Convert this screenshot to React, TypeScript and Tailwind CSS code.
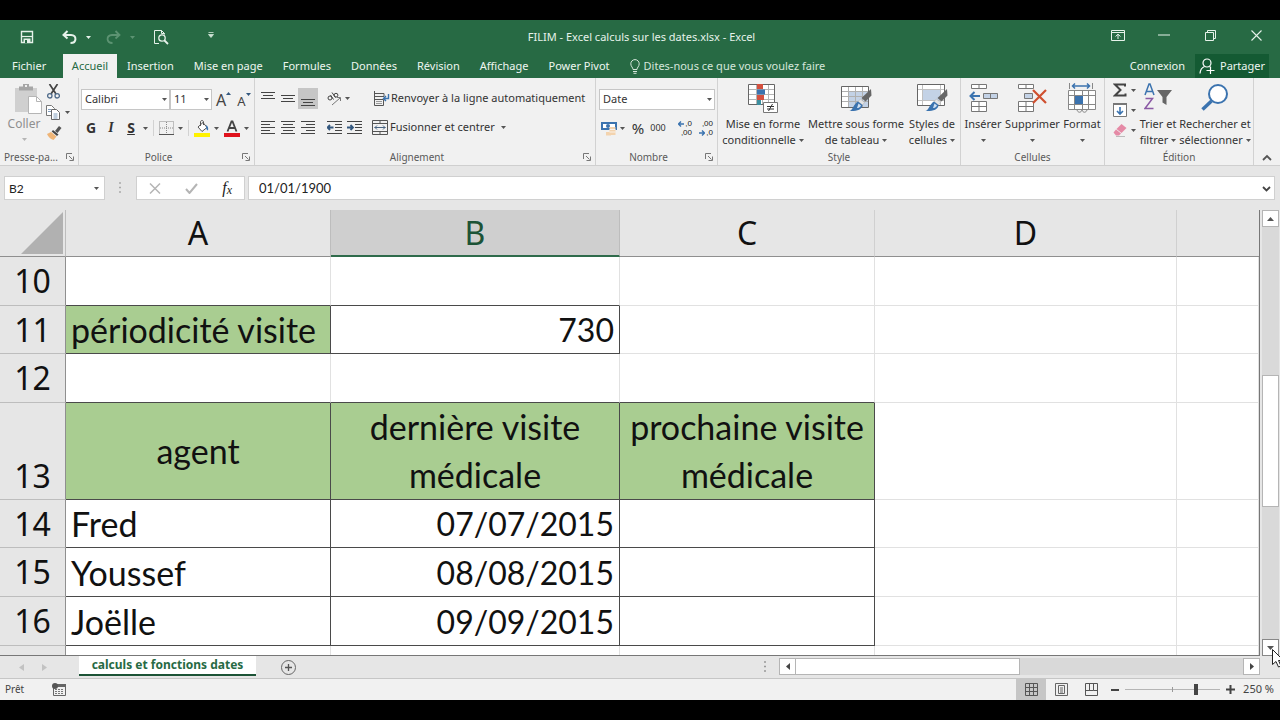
import React from "react";

type Kids = { children: React.ReactNode };
const INK = "#444444";
const BLUE = "#3b73af";

function Svg({ w, h, children, className = "" }: { w: number; h: number; className?: string } & Kids) {
  return (
    <svg width={w} height={h} viewBox={`0 0 ${w} ${h}`} fill="none" className={`shrink-0 ${className}`} aria-hidden="true">
      {children}
    </svg>
  );
}

function Caret({ color = "#555", className = "" }: { color?: string; className?: string }) {
  return (
    <Svg w={5} h={3} className={className}>
      <path d="M0 0h5L2.5 3z" fill={color} />
    </Svg>
  );
}

function Tool({ label, children, className = "" }: { label: string; className?: string } & Kids) {
  return (
    <button type="button" aria-label={label} className={`flex shrink-0 items-center justify-center ${className}`}>
      {children}
    </button>
  );
}

/* ---------- title bar ---------- */

function WindowTitle() {
  return (
    <div className="flex h-[34px] shrink-0 items-center text-[#e6f2ea]">
      <div className="flex flex-1 items-center pl-5">
        <Tool label="Enregistrer" className="w-[14px]">
          <Svg w={14} h={14}>
            <path d="M1.5 1.5h11v11h-11z" stroke="#e6f2ea" strokeWidth="1.4" />
            <path d="M2 6.500h10" stroke="#e6f2ea" strokeWidth="1.2" />
            <path d="M3.5 8.5h7V13h-7z" fill="#e6f2ea" />
            <path d="M5 10h2v3H5z" fill="#276a44" />
          </Svg>
        </Tool>
        <Tool label="Annuler" className="ml-7 w-[15px]">
          <Svg w={15} h={14}>
            <path d="M5.5 1 1.5 5l4 3.500M1.500 5h7.500c6 .3 6 8-.5 8" stroke="#e6f2ea" strokeWidth="2" />
          </Svg>
        </Tool>
        <Caret color="#e6f2ea" className="ml-[9px]" />
        <Tool label="Rétablir" className="ml-[15px] w-[15px]">
          <Svg w={15} h={14}>
            <path d="m9.500 1 4 4-4 3.500M13.500 5H6c-6 .3-6 8 .5 8" stroke="#5c9372" strokeWidth="1.8" />
          </Svg>
        </Tool>
        <Caret color="#5c9372" className="ml-[9px]" />
        <Tool label="Aperçu avant impression" className="ml-[18px] w-[16px]">
          <Svg w={16} h={16}>
            <path d="M6 14.500H1.500v-13h7l3 3v1M8.500 1.500v3h3" stroke="#e6f2ea" />
            <circle cx="9" cy="9" r="3.200" stroke="#e6f2ea" strokeWidth="1.300" />
            <path d="m11.500 11.500 3.500 3.500" stroke="#e6f2ea" strokeWidth="1.800" />
          </Svg>
        </Tool>
        <Tool label="Personnaliser la barre d'outils" className="ml-[39px] w-[6px] pb-1">
          <Svg w={6} h={6}>
            <path d="M.5.500h5M.5 2.500h5L3 5.500z" stroke="#cfe3d6" strokeWidth=".8" fill="#cfe3d6" />
          </Svg>
        </Tool>
      </div>
      <h1 className="text-[11px]">FILIM - Excel calculs sur les dates.xlsx - Excel</h1>
      <div className="flex flex-1 items-center justify-end gap-8 pr-[17px] pb-1">
        <Tool label="Options d'affichage du ruban" className="w-[14px]">
          <Svg w={14} h={11}>
            <path d="M.5.500h13v10H.5zM.5 2.500h13M7 9V4.500M4.500 6.500 7 4.200l2.500 2.300" stroke="#e6f2ea" />
          </Svg>
        </Tool>
        <Tool label="Réduire" className="w-[14px]">
          <Svg w={12} h={2}>
            <path d="M0 1h12" stroke="#e6f2ea" />
          </Svg>
        </Tool>
        <Tool label="Niveau inférieur" className="w-[14px]">
          <Svg w={11} h={11}>
            <path d="M.5 2.500h8v8h-8zM2.500 2.500v-2h8v8h-2" stroke="#e6f2ea" />
          </Svg>
        </Tool>
        <Tool label="Fermer" className="w-[14px]">
          <Svg w={11} h={11}>
            <path d="m.5.500 10 10m0-10-10 10" stroke="#e6f2ea" strokeWidth="1.100" />
          </Svg>
        </Tool>
      </div>
    </div>
  );
}

const tabs = ["Insertion", "Mise en page", "Formules", "Données", "Révision", "Affichage", "Power Pivot"];

function RibbonTabs() {
  return (
    <nav className="flex h-6 shrink-0 items-stretch text-[11px] text-[#eef6f0]">
      <a href="#fichier" className="flex w-[63px] items-center pl-3">Fichier</a>
      <a href="#accueil" className="flex w-[54px] items-center justify-center bg-[#f1f1f1] text-[#276a44]">Accueil</a>
      <div className="flex items-center gap-5 pl-[10px]">
        {tabs.map((t) => (
          <a key={t} href={`#${t}`} className="whitespace-nowrap">{t}</a>
        ))}
      </div>
      <button type="button" className="ml-5 flex items-center gap-1 whitespace-nowrap text-[#d5e6db]">
        <Svg w={10} h={15}>
          <path d="M3 10.500C3 8.500.8 7.500.8 4.800a4.200 4.200 0 0 1 8.400 0c0 2.700-2.200 3.700-2.200 5.700zM3 12.500h4M3.500 14.300h3" stroke="#d5e6db" />
        </Svg>
        Dites-nous ce que vous voulez faire
      </button>
      <div className="flex flex-1 justify-end">
        <a href="#connexion" className="flex items-center px-[10px]">Connexion</a>
        <button type="button" className="mr-[11px] flex w-[74px] items-center gap-1 bg-[#145a33] pl-1">
          <Svg w={17} h={16}>
            <circle cx="8" cy="5" r="4" stroke="#fff" strokeWidth="1.200" />
            <path d="M1 15.500c.3-4 2-6 4.500-7M10.500 8.500l1.500 1M7.500 12.500h8M11.500 9v7" stroke="#fff" strokeWidth="1.200" />
          </Svg>
          Partager
        </button>
      </div>
    </nav>
  );
}

/* ---------- ribbon ---------- */

function Launcher() {
  return (
    <button type="button" aria-label="Options du groupe" className="absolute right-1 bottom-1">
      <Svg w={8} h={8}>
        <path d="M.5 6V.500H6M3 3l3.500 3.500M7.500 3.500v4h-4" stroke="#777" />
      </Svg>
    </button>
  );
}

function Group({ name, width, launcher = false, children }: { name: string; width: string; launcher?: boolean } & Kids) {
  return (
    <section className={`relative flex shrink-0 flex-col border-r border-[#d2d2d2] ${width}`}>
      <div className="h-[72px]">{children}</div>
      <h2 className={`text-center text-[10px] leading-4 text-[#5a5a5a] ${launcher ? "pr-4" : ""}`}>{name}</h2>
      {launcher && <Launcher />}
    </section>
  );
}

function Drop({ label, value, width }: { label: string; value: string; width: string }) {
  return (
    <div className={`relative h-[21px] shrink-0 ${width}`}>
      <select aria-label={label} defaultValue={value} className="block h-full w-full appearance-none border border-[#c6c6c6] bg-white pl-[3px] text-[11px] text-[#333]">
        <option>{value}</option>
      </select>
      <Caret className="pointer-events-none absolute top-[9px] right-[3px]" />
    </div>
  );
}

function Lines({ rows }: { rows: [number, number][] }) {
  return (
    <Svg w={14} h={14}>
      {rows.map(([x, len], i) => (
        <path key={i} d={`M${x} ${i * 3 + 1.5}h${len}`} stroke={INK} />
      ))}
    </Svg>
  );
}

function VLines({ y }: { y: number }) {
  return (
    <Svg w={14} h={16}>
      <path d={`M0 ${y + 0.5}h14M2 ${y + 3.5}h10M0 ${y + 6.5}h14`} stroke={INK} />
    </Svg>
  );
}

function Indent({ flip = false }: { flip?: boolean }) {
  return (
    <Svg w={15} h={14}>
      <path d="M0 1.500h15M8 4.500h7M8 7.500h7M8 10.500h7M0 13.500h15" stroke={INK} />
      <path d={flip ? "M0 7.500h6M3.500 5 6 7.500 3.500 10" : "M.500 7.500h6M3 5 .500 7.500 3 10"} stroke="#34587f" strokeWidth="1.800" />
    </Svg>
  );
}

function Clipboard() {
  return (
    <Group name="Presse-pa..." width="w-[79px]" launcher>
      <div className="flex pt-[6px] pl-[7px]">
        <button type="button" className="flex w-[34px] flex-col items-center text-[12px] text-[#8f8f8f]">
          <Svg w={28} h={30} className="ml-2">
            <path d="M1 4h22v24H1z" fill="#d0d0d0" />
            <path d="M5 2.500h4V0h6v2.500h4v4H5z" fill="#a6a6a6" />
            <path d="M11 1h2v2h-2z" fill="#f1f1f1" />
            <path d="M14.500 12.500h8l5 5v12h-13z" fill="#fff" stroke="#b5b5b5" />
            <path d="M22.500 12.500v5h5" stroke="#b5b5b5" />
          </Svg>
          <span className="leading-5">Coller</span>
          <Caret color="#b5b5b5" className="mt-1" />
        </button>
        <div className="flex flex-col gap-[6px] pl-[5px]">
          <Tool label="Couper" className="w-[14px]">
            <Svg w={13} h={15}>
              <path d="M2.500 0 9 10M10.500 0 4 10" stroke="#444" strokeWidth="1.700" />
              <circle cx="2.800" cy="11.800" r="2.200" stroke="#4f6b8a" strokeWidth="1.300" />
              <circle cx="10.200" cy="11.800" r="2.200" stroke="#4f6b8a" strokeWidth="1.300" />
            </Svg>
          </Tool>
          <Tool label="Copier" className="gap-[5px]">
            <Svg w={14} h={15}>
              <path d="M.500.500h5l3 3v7h-8z" fill="#fff" stroke="#777" />
              <path d="M5.500 4.500h5l3 3v7h-8z" fill="#fff" stroke="#666" />
              <path d="M2 4.500h3M2 6.500h3M7.500 9h4M7.500 11h4M7.500 13h4" stroke="#7f9cbc" />
            </Svg>
            <Caret />
          </Tool>
          <Tool label="Reproduire la mise en forme" className="w-[16px]">
            <Svg w={15} h={14}>
              <path d="m12 0 2.500 2-4 5-2.500-2z" fill="#555" />
              <path d="m6 4 5.500 4.500-1.500 1.500L4.700 5.500z" fill="#444" />
              <path d="m4 6 5.500 4.500L6.500 14C3 13 1 10.500 0 8z" fill="#efb577" />
            </Svg>
          </Tool>
        </div>
      </div>
    </Group>
  );
}

function FontGroup() {
  return (
    <Group name="Police" width="w-[176px]" launcher>
      <div className="flex h-full flex-col gap-2 pt-[11px] pl-[2px]">
        <div className="flex h-[21px] items-center">
          <Drop label="Police" value="Calibri" width="w-[89px]" />
          <Drop label="Taille de police" value="11" width="w-[42px]" />
          <Tool label="Augmenter la taille" className="ml-1 text-[16px] leading-5 text-[#444]">
            A<Svg w={5} h={3} className="mb-3"><path d="M0 3h5L2.500 0z" fill="#34587f" /></Svg>
          </Tool>
          <Tool label="Réduire la taille" className="ml-[6px] pt-[2px] text-[13px] leading-5 text-[#444]">
            A<Caret color="#34587f" className="mb-3" />
          </Tool>
        </div>
        <div className="flex h-5 items-center text-[14px] leading-5 text-[#333]">
          <Tool label="Gras" className="w-5 font-bold">G</Tool>
          <Tool label="Italique" className="w-5 font-['Liberation_Serif',serif] font-bold italic">I</Tool>
          <Tool label="Souligné" className="w-5 font-bold underline">S</Tool>
          <Caret className="ml-[2px]" />
          <span className="ml-[5px] h-4 w-px bg-[#d2d2d2]" />
          <Tool label="Bordures" className="ml-[5px]">
            <Svg w={15} h={14}>
              <path d="M.500.500h14v13H.500zM7.500 1v12M1 7h13" stroke="#8a8a8a" strokeDasharray="1 1" />
              <path d="M0 13.500h15" stroke="#555" />
            </Svg>
          </Tool>
          <Caret className="ml-1" />
          <span className="ml-[5px] h-4 w-px bg-[#d2d2d2]" />
          <Tool label="Couleur de remplissage" className="ml-[5px]">
            <Svg w={16} h={17}>
              <path d="m4 7 5-4.500 4 5-5 4z" fill="#fff" stroke="#555" />
              <path d="M6.500 6V2c0-2 3-2 3 0v3" stroke="#555" />
              <path d="M12 5c2 1 2.500 3 2 5.500-1.500-.5-2-2-2-5.500z" fill={BLUE} />
              <path d="M0 13h16v4H0z" fill="#fff200" />
            </Svg>
          </Tool>
          <Caret className="ml-1" />
          <Tool label="Couleur de police" className="ml-[5px]">
            <Svg w={16} h={17}>
              <path d="M3.500 11.500 7.500 1.500h1l4 10M5 8h6" stroke="#444" strokeWidth="1.800" />
              <path d="M0 13h16v4H0z" fill="#e0121c" />
            </Svg>
          </Tool>
          <Caret className="ml-1" />
        </div>
      </div>
    </Group>
  );
}

function AlignGroup() {
  return (
    <Group name="Alignement" width="w-[341px]" launcher>
      <div className="flex h-full flex-col gap-2 pt-[10px] pl-[3px] text-[11px] text-[#333]">
        <div className="flex h-[21px] items-center">
          <Tool label="Aligner en haut" className="h-[21px] w-5"><VLines y={1} /></Tool>
          <Tool label="Aligner au centre" className="h-[21px] w-5"><VLines y={4} /></Tool>
          <Tool label="Aligner en bas" className="h-[21px] w-5 bg-[#c6c6c6]"><VLines y={8} /></Tool>
          <Tool label="Orientation" className="ml-[9px]">
            <Svg w={15} h={14}>
              <circle cx="3" cy="6" r="2" stroke={INK} />
              <path d="m3.500 3 3 4.500" stroke={INK} />
              <path d="m5 .5 3.500 5" stroke={INK} />
              <circle cx="9" cy="3.200" r="1.900" stroke={INK} />
              <path d="m5 13 8-7M13.500 9V5.500H10" stroke="#777" />
            </Svg>
          </Tool>
          <Caret className="ml-[3px]" />
          <Tool label="Renvoyer à la ligne automatiquement" className="ml-6 gap-px">
            <Svg w={16} h={15}>
              <path d="M.500 0v14.500M.500 2.500h9.500v3H.500M.500 8.500h9v6h-9" stroke="#555" />
              <path d="M2 10.500h6M2 12.500h6" stroke="#9a9a9a" />
              <path d="M14.500 3v4.500H10M12 5 9.500 7.500 12 10" stroke={BLUE} strokeWidth="1.400" />
            </Svg>
            <span className="whitespace-nowrap">Renvoyer à la ligne automatiquement</span>
          </Tool>
        </div>
        <div className="flex h-5 items-center">
          <Tool label="Aligner à gauche" className="w-5"><Lines rows={[[0, 14], [0, 9], [0, 14], [0, 9], [0, 14]]} /></Tool>
          <Tool label="Centrer" className="w-5"><Lines rows={[[0, 14], [2, 10], [0, 14], [2, 10], [0, 14]]} /></Tool>
          <Tool label="Aligner à droite" className="w-5"><Lines rows={[[0, 14], [5, 9], [0, 14], [5, 9], [0, 14]]} /></Tool>
          <Tool label="Diminuer le retrait" className="ml-[9px]"><Indent /></Tool>
          <Tool label="Augmenter le retrait" className="ml-[5px]"><Indent flip /></Tool>
          <Tool label="Fusionner et centrer" className="ml-[10px] gap-[2px]">
            <Svg w={16} h={15}>
              <path d="M.500.500h15v14H.500zM.500 3.500h15M.500 11.500h15M8 .500v3M8 11.500v3" stroke="#555" />
              <path d="M2.500 7.500h11M5 5.500l-2 2 2 2M11 5.500l2 2-2 2" stroke="#4a6583" />
            </Svg>
            <span className="whitespace-nowrap">Fusionner et centrer</span>
            <Caret className="ml-1" />
          </Tool>
        </div>
      </div>
    </Group>
  );
}

function Decimals({ top, bottom, arrow }: { top: string; bottom: string; arrow: "top" | "bottom" }) {
  const blue = (
    <Svg w={6} h={6}>
      <path d={arrow === "top" ? "M.5 3H6M3 .5.5 3 3 5.500" : "M0 3h5.500M3 .500 5.500 3 3 5.500"} stroke={BLUE} strokeWidth="1.400" />
    </Svg>
  );
  return (
    <span className="flex w-4 flex-col items-end font-['Liberation_Sans',sans-serif] text-[8px] leading-[9px] text-[#222]">
      <span className="flex items-center gap-px">{arrow === "top" && blue}{top}</span>
      <span className="flex items-center gap-px">{arrow === "bottom" && blue}{bottom}</span>
    </span>
  );
}

function NumberGroup() {
  return (
    <Group name="Nombre" width="w-[122px]" launcher>
      <div className="flex h-full flex-col gap-2 pt-[11px] pl-[3px] text-[#333]">
        <Drop label="Format de nombre" value="Date" width="w-[116px]" />
        <div className="flex h-5 items-center pl-[2px]">
          <Tool label="Format comptabilité">
            <Svg w={16} h={15}>
              <path d="M0 1h16v8H0z" fill={BLUE} />
              <path d="M2 3h12v4H2z" fill="#fff" />
              <circle cx="7" cy="5" r="2" fill={BLUE} />
              <path d="M8.500 6h6v8h-6z" fill="#f3d3ae" />
              <path d="M5 11h5v3.500H5z" fill="#f3d3ae" />
              <path d="M8.500 8.500h6M8.500 11h6" stroke="#fff" strokeWidth=".7" />
            </Svg>
          </Tool>
          <Caret className="ml-[3px]" />
          <Tool label="Pourcentage" className="ml-[5px] w-4 text-[15px]">%</Tool>
          <Tool label="Séparateur de milliers" className="ml-1 w-4 text-[9px]">000</Tool>
          <Tool label="Ajouter une décimale" className="ml-[10px]"><Decimals top=",0" bottom=",00" arrow="top" /></Tool>
          <Tool label="Réduire les décimales" className="ml-[5px]"><Decimals top=",00" bottom=",0" arrow="bottom" /></Tool>
        </div>
      </div>
    </Group>
  );
}

function BigButton({ icon, lines, width }: { icon: React.ReactNode; lines: [string, string]; width: string }) {
  return (
    <button type="button" className={`flex shrink-0 flex-col items-center pt-[5px] text-[11px] leading-4 text-[#333] ${width}`}>
      <span className="flex h-[33px] items-start justify-center">{icon}</span>
      <span className="whitespace-nowrap">{lines[0]}</span>
      <span className="flex h-4 items-center gap-[3px] whitespace-nowrap">
        {lines[1]}
        <Caret />
      </span>
    </button>
  );
}

function Brush() {
  return (
    <>
      <path d="m30 6 .5 6.500-6 6-4-3.500z" fill="#666" />
      <path d="m19.500 16 4 3.500-2 2.500-4.500-3.500z" fill="#e4e4e4" stroke="#aaa" strokeWidth=".5" />
      <path d="m17 18.500 4.500 3.500c0 5-7 6.500-13 6 3.500-1 4-7 8.500-9.500z" fill={BLUE} />
      <path d="m17.500 20.500 2.500 2c-1 2-2.500 2.500-4 2.500z" fill="#cfe0f2" />
    </>
  );
}

function StyleGroup() {
  return (
    <Group name="Style" width="w-[243px]">
      <div className="flex justify-between px-[3px]">
        <BigButton
          width="w-[84px]"
          lines={["Mise en forme", "conditionnelle"]}
          icon={
            <Svg w={30} h={30}>
              <path d="M.500 1.500h26v20H.500z" fill="#fff" />
              <path d="M.500 6.500h26M.500 11.500h26M.500 16.500h26M8.500 1v20M14.500 1v20M20.500 1v20" stroke="#b5b5b5" />
              <path d="M.500 1.500h26v20H.500z" stroke="#666" />
              <path d="M9 1h6v5H9zM9 12h7v5H9z" fill="#d4503f" />
              <path d="M9 6.500h8v5H9z" fill={BLUE} />
              <path d="M9 17h4v5H9z" fill="#3d8f9f" />
              <path d="M15.500 19.500h14v10h-14z" fill="#fff" stroke="#777" />
              <path d="M19 23.500h7M19 26h7M24.500 21l-4 7" stroke="#333" />
            </Svg>
          }
        />
        <BigButton
          width="w-[98px]"
          lines={["Mettre sous forme", "de tableau"]}
          icon={
            <Svg w={31} h={30}>
              <path d="M.500 3.500h27v21H.500z" fill="#fff" />
              <path d="M8 9h20v15H8z" fill="#c3d2e6" />
              <path d="M.500 8.500h27M.500 13.500h27M.500 18.500h27M7.500 4v20M14.500 4v20M21.500 4v20" stroke="#b0b0b0" />
              <path d="M.500 3.500h27v21H.500z" stroke="#666" />
              <Brush />
            </Svg>
          }
        />
        <BigButton
          width="w-[50px]"
          lines={["Styles de", "cellules"]}
          icon={
            <Svg w={31} h={30}>
              <path d="M.500 1.500h27v21H.500z" fill="#fff" />
              <path d="M.500 6.500h27M.500 17.500h27M5.500 1v21M23.500 1v21" stroke="#c0c0c0" />
              <path d="M.500 1.500h27v21H.500z" stroke="#666" />
              <path d="M6 7h17v10H6z" fill="#c3d2e6" />
              <Brush />
            </Svg>
          }
        />
      </div>
    </Group>
  );
}

function CellsGroup() {
  return (
    <Group name="Cellules" width="w-[144px]">
      <div className="flex justify-between px-[2px]">
        <BigButton
          width="w-[40px]"
          lines={["Insérer", ""]}
          icon={
            <Svg w={29} h={30}>
              <path d="M2.500 1.500h15v4h-15zM10 1.500v4M2.500 18.500h15v10h-15zM10 18.500v10M2.500 23.500h15" fill="#fff" stroke="#777" />
              <path d="M14.500 10.500h14v5h-14zM21.500 10.500v5" fill="#c3d2e6" stroke="#777" />
              <path d="M1 13h10M5.500 9l-4 4 4 4" stroke={BLUE} strokeWidth="2" />
            </Svg>
          }
        />
        <BigButton
          width="w-[56px]"
          lines={["Supprimer", ""]}
          icon={
            <Svg w={29} h={30}>
              <path d="M.500 1.500h15v4h-15zM8 1.500v4M.500 18.500h15v10h-15zM8 18.500v10M.500 23.500h15" fill="#fff" stroke="#777" />
              <path d="M6.500 10.500h8v5h-8z" fill="#c3d2e6" stroke="#777" />
              <path d="m15 7 13 13M28 7 15 20" stroke="#cf5030" strokeWidth="2.200" />
            </Svg>
          }
        />
        <BigButton
          width="w-[40px]"
          lines={["Format", ""]}
          icon={
            <Svg w={29} h={30}>
              <path d="M.500 7.500h27v19H.500zM.500 12.500h27M.500 21.500h27M6.500 8v18M14.500 8v18M20.500 8v18" fill="#fff" stroke="#888" />
              <path d="M7 13h8v8H7z" fill={BLUE} />
              <path d="M1.500 0v6M24.500 0v6M9 27c1 3 4 3 5 0 1 3 4 3 5 0" stroke="#888" />
              <path d="M4 3h18M7 .5 4.500 3 7 5.500M19 .500 21.500 3 19 5.500" stroke={BLUE} strokeWidth="1.500" />
            </Svg>
          }
        />
      </div>
    </Group>
  );
}

function EditGroup() {
  return (
    <Group name="Édition" width="w-[149px]">
      <div className="flex pl-[5px]">
        <div className="flex w-[28px] flex-col gap-[6px] pt-[5px]">
          <Tool label="Somme automatique" className="gap-1">
            <Svg w={14} h={14}><path d="M12 3.500V1.500H2L7.500 7 2 12.500h10.500v-2" stroke="#444" strokeWidth="2" /></Svg>
            <Caret />
          </Tool>
          <Tool label="Remplissage" className="gap-1">
            <Svg w={14} h={14}>
              <path d="M.500.500h13v13H.500z" fill="#fff" stroke="#777" />
              <path d="M0 0h14v2H0z" fill="#777" />
              <path d="M7 4v7M4 8l3 3 3-3" stroke={BLUE} strokeWidth="1.600" />
            </Svg>
            <Caret />
          </Tool>
          <Tool label="Effacer" className="gap-1">
            <Svg w={14} h={14}>
              <path d="m8.500 1 5 4-5 5-5-4z" fill="#e58aa6" />
              <path d="m3 6.500 5 4-2 2H3L.500 9.500z" fill="#e58aa6" />
              <path d="M3 13.500h9" stroke="#bbb" />
            </Svg>
            <Caret />
          </Tool>
        </div>
        <BigButton
          width="w-[40px]"
          lines={["Trier et", "filtrer"]}
          icon={
            <Svg w={28} h={28}>
              <path d="M1 12 5 1h1l4 11M2.500 8.500h6" stroke={BLUE} strokeWidth="1.500" />
              <path d="M1.500 15.500h7l-7.500 10h8.500" stroke="#8b5aa5" strokeWidth="1.500" />
              <path d="M13 7h15l-5.500 7v8l-4-2.500V14z" fill="#666" />
            </Svg>
          }
        />
        <BigButton
          width="w-[74px]"
          lines={["Rechercher et", "sélectionner"]}
          icon={
            <Svg w={28} h={28}>
              <circle cx="17" cy="11" r="9" stroke={BLUE} strokeWidth="2" fill="#fff" />
              <path d="m10.500 18-9 8.500" stroke={BLUE} strokeWidth="3.500" />
            </Svg>
          }
        />
      </div>
    </Group>
  );
}

function Ribbon() {
  return (
    <div className="flex h-[88px] shrink-0 border-b border-[#cfcfcf] bg-[#f1f1f1]">
      <Clipboard />
      <FontGroup />
      <AlignGroup />
      <NumberGroup />
      <StyleGroup />
      <CellsGroup />
      <EditGroup />
      <div className="flex flex-1 items-end justify-center pb-1">
        <Tool label="Réduire le ruban">
          <Svg w={10} h={7}><path d="m1 6 4-4 4 4" stroke="#555" strokeWidth="1.800" /></Svg>
        </Tool>
      </div>
    </div>
  );
}

/* ---------- formula bar ---------- */

function FormulaBar() {
  return (
    <div className="flex h-11 shrink-0 items-center pr-[5px] pl-[4px] font-['Lato',sans-serif] text-[12px] text-[#222]">
      <div className="relative h-6 w-[101px] border border-[#d0d0d0] bg-white">
        <input aria-label="Zone Nom" defaultValue="B2" className="h-full w-full bg-transparent pl-1 outline-none" />
        <Caret className="pointer-events-none absolute top-[10px] right-[5px]" />
      </div>
      <Svg w={3} h={12} className="ml-[14px]">
        <path d="M0 1h2M0 5.500h2M0 10h2" stroke="#aaa" strokeWidth="1.500" />
      </Svg>
      <div className="ml-[14px] flex h-6 w-[109px] items-center justify-between border border-[#d0d0d0] bg-white px-3">
        <Tool label="Annuler la saisie">
          <Svg w={12} h={11}><path d="m1 .500 10 10m0-10-10 10" stroke="#b5b5b5" strokeWidth="1.500" /></Svg>
        </Tool>
        <Tool label="Entrer">
          <Svg w={13} h={11}><path d="m1 6 3.500 4L12 1" stroke="#b5b5b5" strokeWidth="2" /></Svg>
        </Tool>
        <Tool label="Insérer une fonction" className="font-['Liberation_Serif',serif] text-[16px] leading-5 italic">
          f<span className="pt-1 text-[12px]">x</span>
        </Tool>
      </div>
      <div className="relative ml-[3px] h-6 flex-1 border border-[#d0d0d0] bg-white">
        <input aria-label="Barre de formule" defaultValue="01/01/1900" className="h-full w-full bg-transparent pl-[10px] text-[13px] outline-none" />
        <Svg w={9} h={6} className="pointer-events-none absolute top-[9px] right-[3px]">
          <path d="m1 1 3.500 3.500L8 1" stroke="#444" strokeWidth="1.800" />
        </Svg>
      </div>
    </div>
  );
}

/* ---------- sheet ---------- */

const K = "border-[#4a4a4a]";
const head = "border-r border-b bg-[#e6e6e6] p-0 text-[32px] leading-[46px] font-normal text-[#111] font-['Noto_Sans','Open_Sans',sans-serif]";
const rowHead = `${head} border-r-[#8f8f8f] border-b-[#bdbdbd]`;
const plain = "border-r border-b border-[#e1e1e1] p-0";
const edgeB = "border-r border-b border-r-[#e1e1e1] border-b-[#4a4a4a] p-0";
const boxed = `border-r border-b ${K} py-0 px-[5px]`;
const green = `${boxed} bg-[#a9cd91]`;

const visits = [
  { row: 14, name: "Fred", last: "07/07/2015", h: "h-12" },
  { row: 15, name: "Youssef", last: "08/08/2015", h: "h-[49px]" },
  { row: 16, name: "Joëlle", last: "09/09/2015", h: "h-[49px]" },
];

function Sheet() {
  return (
    <div className="min-w-0 flex-1 overflow-hidden border-r border-b border-[#777] bg-white">
      <table className="w-full table-fixed border-separate border-spacing-0 font-['Lato',sans-serif] text-[34px] leading-[48px] text-[#111]">
        <colgroup>
          <col className="w-[66px]" />
          <col className="w-[265px]" />
          <col className="w-[289px]" />
          <col className="w-[255px]" />
          <col className="w-[302px]" />
          <col />
        </colgroup>
        <thead>
          <tr className="h-[47px]">
            <th aria-label="Tout sélectionner" className={`${head} border-r-[#bdbdbd] border-b-[#8f8f8f]`}>
              <Svg w={42} h={42} className="ml-auto mr-[2px]"><path d="M42 0v42H0z" fill="#b1b1b1" /></Svg>
            </th>
            <th className={`${head} border-r-[#bdbdbd] border-b-[#8f8f8f]`}>A</th>
            <th className="border-r border-b-2 border-r-[#bdbdbd] border-b-[#2f6b4b] bg-[#cfcfcf] p-0 font-['Noto_Sans','Open_Sans',sans-serif] text-[32px] leading-[45px] font-normal text-[#1c5336]">B</th>
            <th className={`${head} border-r-[#d0d0d0] border-b-[#8f8f8f]`}>C</th>
            <th className={`${head} border-r-[#d0d0d0] border-b-[#8f8f8f]`}>D</th>
            <th className={`${head} border-r-0 border-b-[#8f8f8f]`} />
          </tr>
        </thead>
        <tbody>
          <tr className="h-[49px]">
            <th className={rowHead}>10</th>
            <td className={edgeB} />
            <td className={edgeB} />
            <td className={plain} />
            <td className={plain} />
            <td className={plain} />
          </tr>
          <tr className="h-12">
            <th className={rowHead}>11</th>
            <td className={`${green} leading-[47px] whitespace-nowrap`}>périodicité visite</td>
            <td className={`${boxed} text-right text-[32px] leading-[47px]`}>730</td>
            <td className={plain} />
            <td className={plain} />
            <td className={plain} />
          </tr>
          <tr className="h-[49px]">
            <th className={rowHead}>12</th>
            <td className={edgeB} />
            <td className={edgeB} />
            <td className={edgeB} />
            <td className={plain} />
            <td className={plain} />
          </tr>
          <tr className="h-[97px]">
            <th className={`${rowHead} align-bottom`}>13</th>
            <td className={`${green} text-center`}>agent</td>
            <td className={`${green} text-center`}>dernière visite<br />médicale</td>
            <td className={`${green} text-center whitespace-nowrap`}>prochaine visite<br />médicale</td>
            <td className={plain} />
            <td className={plain} />
          </tr>
          {visits.map((v) => (
            <tr key={v.row} className={v.h}>
              <th className={rowHead}>{v.row}</th>
              <td className={`${boxed} leading-[47px]`}>{v.name}</td>
              <td className={`${boxed} text-right text-[32px] leading-[47px]`}>{v.last}</td>
              <td className={boxed} />
              <td className={plain} />
              <td className={plain} />
            </tr>
          ))}
          <tr className="h-12">
            <th className={rowHead} />
            <td className={plain} />
            <td className={plain} />
            <td className={plain} />
            <td className={plain} />
            <td className={plain} />
          </tr>
        </tbody>
      </table>
    </div>
  );
}

function VerticalScroll() {
  return (
    <div className="relative flex w-5 shrink-0 flex-col items-center bg-[#e6e6e6]">
      <Tool label="Défiler vers le haut" className="h-[17px] w-[17px] border border-[#b5b5b5] bg-white">
        <Svg w={7} h={4}><path d="M0 4h7L3.500 0z" fill="#555" /></Svg>
      </Tool>
      <div className="flex w-[17px] flex-1 flex-col bg-[#d9d9d9]">
        <div className="flex-[149]" />
        <div className="flex-[131] border border-[#b5b5b5] bg-white" />
        <div className="flex-[133]" />
      </div>
      <Tool label="Défiler vers le bas" className="h-[17px] w-[17px] border border-[#888] bg-white">
        <Svg w={7} h={4}><path d="M0 0h7L3.500 4z" fill="#555" /></Svg>
      </Tool>
      <Svg w={12} h={19} className="pointer-events-none absolute -right-1 -bottom-3 z-10">
        <path d="M.500.500v15l3.500-3 2.500 5.500 2.500-1-2.500-5.500h5z" fill="#fff" stroke="#222" />
      </Svg>
    </div>
  );
}

function SheetTabs() {
  return (
    <div className="flex h-[22px] shrink-0 bg-[#e6e6e6]">
      <div className="flex w-[79px] shrink-0 items-center gap-[18px] pl-[19px]">
        <Tool label="Feuille précédente"><Svg w={5} h={7}><path d="M5 0v7L0 3.500z" fill="#c2c2c2" /></Svg></Tool>
        <Tool label="Feuille suivante"><Svg w={5} h={7}><path d="M0 0v7l5-3.500z" fill="#c2c2c2" /></Svg></Tool>
      </div>
      <a href="#feuille" className="mb-[2px] flex w-[177px] shrink-0 items-center justify-center border-b-2 border-[#1c5336] bg-white text-[12px] font-bold whitespace-nowrap text-[#276a44]">
        calculs et fonctions dates
      </a>
      <Tool label="Nouvelle feuille" className="ml-[25px]">
        <Svg w={15} h={15}>
          <circle cx="7.500" cy="7.500" r="7" stroke="#666" />
          <path d="M4 7.500h7M7.500 4v7" stroke="#555" strokeWidth="1.300" />
        </Svg>
      </Tool>
      <div className="flex flex-1 items-center justify-end pr-[12px]">
        <Svg w={3} h={12}><path d="M0 1h2M0 5.500h2M0 10h2" stroke="#999" strokeWidth="1.500" /></Svg>
      </div>
      <div className="mt-[2px] mr-5 flex h-[17px] w-[481px] shrink-0 bg-[#d9d9d9]">
        <Tool label="Défiler à gauche" className="w-[17px] border border-[#b5b5b5] bg-white"><Svg w={4} h={7}><path d="M4 0v7L0 3.500z" fill="#444" /></Svg></Tool>
        <div className="flex flex-1">
          <div className="w-1/2 border border-l-0 border-[#b5b5b5] bg-white" />
        </div>
        <Tool label="Défiler à droite" className="w-[17px] border border-[#b5b5b5] bg-white"><Svg w={4} h={7}><path d="M0 0v7l4-3.500z" fill="#444" /></Svg></Tool>
      </div>
    </div>
  );
}

function StatusBar() {
  return (
    <footer className="flex h-[22px] shrink-0 items-center border-t border-[#c6c6c6] bg-[#f1f1f1] pl-[5px] text-[10px] text-[#444]">
      <span className="flex-1">
        <span className="flex items-center gap-7">
          Prêt
          <Svg w={14} h={13}>
            <path d="M1.500 3v9.500h12v-10H5" stroke="#666" />
            <path d="M5 1h9v3H5z" fill="#666" />
            <circle cx="3" cy="3" r="3" fill="#555" />
            <path d="M3 6.500h9M3 8.500h9M3 10.500h9" stroke="#777" strokeDasharray="2 1" />
          </Svg>
        </span>
      </span>
      <Tool label="Normal" className="h-full w-[30px] bg-[#c6c6c6]">
        <Svg w={13} h={13}><path d="M.500.500h12v12H.500zM.500 4.500h12M.500 8.500h12M4.500.500v12M8.500.500v12" stroke="#555" /></Svg>
      </Tool>
      <Tool label="Mise en page" className="w-[30px]">
        <Svg w={13} h={13}><path d="M.500.500h12v12H.500zM3.500 2.500h6v8h-6zM5 5h3M5 7h3M5 9h3" stroke="#666" /></Svg>
      </Tool>
      <Tool label="Aperçu des sauts de page" className="w-[30px]">
        <Svg w={13} h={13}><path d="M.500.500h12v12H.500zM.500 7.500h8v-7M4.500.500v7M8.500 7.500h4" stroke="#555" /></Svg>
      </Tool>
      <Tool label="Zoom arrière" className="ml-1 w-[10px]"><Svg w={8} h={2}><path d="M0 1h8" stroke="#444" strokeWidth="2" /></Svg></Tool>
      <input
        type="range"
        aria-label="Zoom"
        defaultValue={76}
        className="mx-[5px] h-3 w-[95px] appearance-none bg-[linear-gradient(#999,#999),linear-gradient(#b5b5b5,#b5b5b5)] bg-[length:1px_5px,100%_1px] bg-center bg-no-repeat [&::-webkit-slider-thumb]:h-[11px] [&::-webkit-slider-thumb]:w-1 [&::-webkit-slider-thumb]:appearance-none [&::-webkit-slider-thumb]:bg-[#444]"
      />
      <Tool label="Zoom avant" className="w-[10px]"><Svg w={9} h={9}><path d="M0 4.500h9M4.500 0v9" stroke="#444" strokeWidth="2" /></Svg></Tool>
      <span className="w-[45px] pr-[6px] text-right text-[11px] whitespace-nowrap">250 %</span>
    </footer>
  );
}

export default function App() {
  return (
    <div className="h-screen overflow-hidden bg-black py-5 font-['Noto_Sans','Open_Sans',sans-serif]">
      <div className="flex h-full flex-col bg-[#e6e6e6]">
        <header className="shrink-0 bg-[#276a44]">
          <WindowTitle />
          <RibbonTabs />
        </header>
        <Ribbon />
        <FormulaBar />
        <main className="flex min-h-0 flex-1">
          <Sheet />
          <VerticalScroll />
        </main>
        <SheetTabs />
        <StatusBar />
      </div>
    </div>
  );
}
